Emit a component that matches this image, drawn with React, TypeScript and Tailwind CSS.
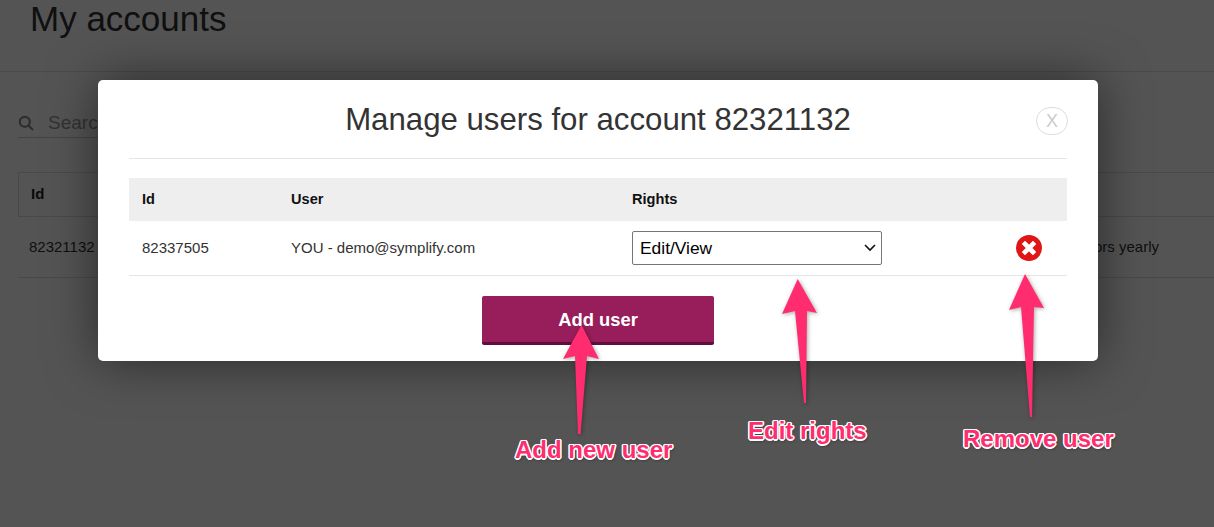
import React from "react";

const labelClass =
  "absolute whitespace-nowrap font-bold text-[#ff2d6f] [font-size:24px] leading-none [text-shadow:1px_1px_0_#fff,-1px_-1px_0_#fff,1px_-1px_0_#fff,-1px_1px_0_#fff,0_1.5px_0_#fff,1.5px_0_0_#fff,-1.5px_0_0_#fff,0_-1.5px_0_#fff,1px_2px_3px_rgba(0,0,0,0.5)]";

function Arrows() {
  return (
    <svg className="absolute left-0 top-0 drop-shadow-[1px_1px_2px_rgba(0,0,0,0.35)]" width="1214" height="527" fill="#ff2d6f">
      <path d="M581.5 325 L599 359 L587 356 L580.5 434 L578 434 L575 356 L563 359 Z" />
      <path d="M797.7 279 L817 313 L807 311 L806 403 L804 403 L795 311 L782 314 Z" />
      <path d="M1025 274 L1044 308 L1034 307 L1032 417 L1030 417 L1021 307 L1009 310 Z" />
    </svg>
  );
}

export default function App() {
  return (
    <div className="relative h-[527px] w-[1214px] overflow-hidden bg-white font-['Liberation_Sans',Arial,sans-serif]">
      {/* page behind the overlay */}
      <div className="flex h-[72px] items-start border-b border-[#e4e4e4] px-[30px]">
        <h1 className="text-[35px] leading-[38px] text-[#333]">My accounts</h1>
      </div>
      <div className="pl-[18px]">
        <div className="mt-[40px] flex h-[26px] w-[300px] items-center gap-[14px] border-b border-[#ccc] pb-[3px]">
          <svg width="16" height="16" viewBox="0 0 16 16" fill="none" stroke="#888" strokeWidth="2.2">
            <circle cx="6.8" cy="6.8" r="5" />
            <path d="M10.5 10.5 L15 15" />
          </svg>
          <span className="text-[19px] text-[#999]">Search</span>
        </div>
        <div className="mt-[34px] flex h-[45px] items-center border-y border-l border-[#ddd] px-[12px] text-[15px] font-bold text-[#222]">
          Id
        </div>
        <div className="flex h-[61px] items-center justify-between border-b border-[#ddd] pl-[11px] pr-[55px] text-[15px] text-[#333]">
          <span>82321132</span>
          <span>Visitors yearly</span>
        </div>
      </div>

      {/* overlay */}
      <div className="absolute inset-0 bg-black/[.67]" />

      {/* modal */}
      <div className="absolute left-[98px] top-[80px] h-[281px] w-[1000px] rounded-[5px] bg-white px-[31px] shadow-[0_0_50px_rgba(0,0,0,0.5)]">
        <div className="relative flex h-[79px] items-center justify-center border-b border-[#e5e5e5] pt-[2px]">
          <h2 className="text-[31.2px] text-[#333]">Manage users for account 82321132</h2>
          <button className="absolute right-[-1px] top-[27px] flex h-[28px] w-[32px] items-center justify-center rounded-full border border-[#ddd] text-[18px] font-light text-[#ccc]">
            X
          </button>
        </div>
        <div className="mt-[19px] grid h-[43px] grid-cols-[149px_341px_1fr] items-center bg-[#eee] pl-[13px] text-[14.6px] font-bold text-[#111]">
          <span>Id</span>
          <span>User</span>
          <span>Rights</span>
        </div>
        <div className="grid h-[55px] grid-cols-[149px_341px_1fr_51px] items-center border-b border-[#e5e5e5] pl-[13px] text-[15px] text-[#333]">
          <span>82337505</span>
          <span>YOU - demo@symplify.com</span>
          <span className="relative block h-[34px] w-[250px]">
            <select className="h-[34px] w-[250px] appearance-none rounded-[2px] border border-[#767676] bg-white pl-[7px] text-[17.4px] text-black">
              <option>Edit/View</option>
            </select>
            <svg className="absolute right-[6px] top-[13px]" width="12" height="8" viewBox="0 0 12 8" fill="none" stroke="#111" strokeWidth="1.6">
              <path d="M1 1 L6 6 L11 1" />
            </svg>
          </span>
          <svg width="26" height="26" viewBox="0 0 26 26">
            <circle cx="13" cy="13" r="13" fill="#e01515" />
            <path d="M9 9 L17 17 M17 9 L9 17" stroke="#fff" strokeWidth="4.6" strokeLinecap="square" />
          </svg>
        </div>
        <div className="mt-[20px] flex justify-center">
          <button className="h-[49px] w-[232px] rounded-[2px] border-b-[3px] border-[#5e0f3f] bg-[#981d5b] pt-[1px] text-[18.4px] font-bold text-white">
            Add user
          </button>
        </div>
      </div>

      <Arrows />
      <span className={`${labelClass} left-[515px] top-[438px]`}>Add new user</span>
      <span className={`${labelClass} left-[748px] top-[419px]`}>Edit rights</span>
      <span className={`${labelClass} left-[963px] top-[427px]`}>Remove user</span>
    </div>
  );
}
